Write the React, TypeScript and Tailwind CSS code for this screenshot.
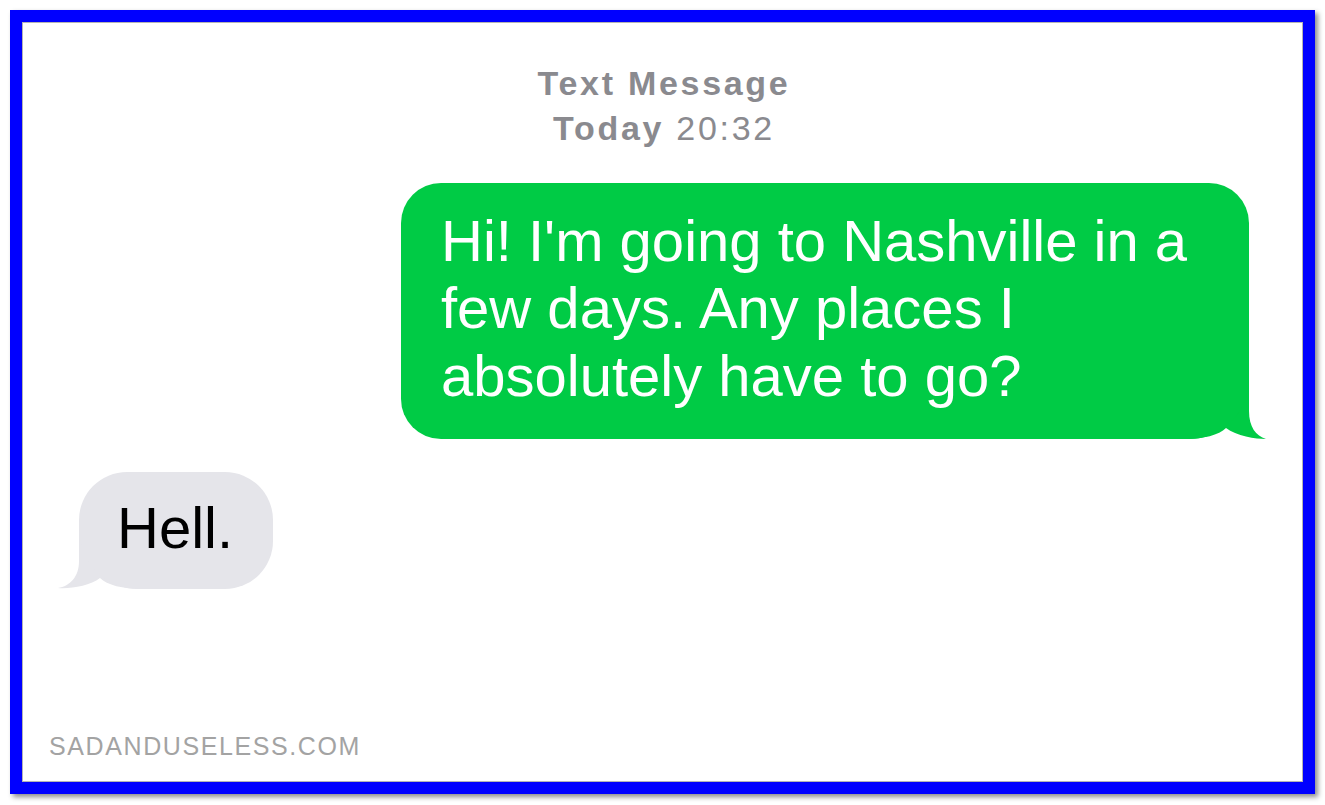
const GREEN = "#00cb45";
const GRAY = "#e5e5ea";

const SentBubble = ({ text }: { text: string }) => (
  <div className="relative mr-[53px] mt-[31.5px] self-end">
    <div className="relative z-10 w-[848px] rounded-[40px] rounded-br-[60px] bg-[#00cb45] pb-[29.5px] pl-[40px] pr-[40px] pt-[24px] text-[58px] leading-[67.5px] text-white">
      {text}
    </div>
    {/* tail, bottom right */}
    <svg className="absolute bottom-0 right-[-18px] z-0" width="86" height="60" viewBox="0 0 86 60">
      <path d="M0 0 H68 V32 C68 48 75 57 85 60 C75 60 55 57 45 49 C38 56 22 60 5 60 H0 Z" fill={GREEN} />
    </svg>
  </div>
);

const ReceivedBubble = ({ text }: { text: string }) => (
  <div className="relative ml-[56px] mt-[33px] self-start">
    <div className="relative z-10 rounded-[48px] rounded-bl-[60px] bg-[#e5e5ea] pb-[27.5px] pl-[38px] pr-[40px] pt-[22px] text-[58px] leading-[67.5px] text-black">
      {text}
    </div>
    {/* tail, bottom left */}
    <svg className="absolute bottom-0 left-[-21px] z-0" width="89" height="60" viewBox="0 0 89 60">
      <path d="M89 0 H21 V32 C21 48 12 57 0 59 C12 60 32 57 42 49 C49 56 65 60 84 60 H89 Z" fill={GRAY} />
    </svg>
  </div>
);

const App = () => {
  return (
    <div className="h-[805px] w-[1325px] bg-white p-[10px] font-['Liberation_Sans',Arial,sans-serif]">
      <div className="h-[784px] w-[1305px] border-[12px] border-[#0000ff] shadow-[3px_3px_5px_rgba(0,0,0,0.45)]">
        <div className="flex h-full flex-col border border-[#b4b4b4] bg-white">
          <div className="pl-[3px] pt-[38px] text-center text-[34px] leading-[45px] tracking-[2.7px] text-[#8a8a8f]">
            <div className="font-bold">Text Message</div>
            <div>
              <span className="font-bold">Today</span> 20:32
            </div>
          </div>

          <SentBubble text="Hi! I'm going to Nashville in a few days. Any places I absolutely have to go?" />
          <ReceivedBubble text="Hell." />

          <div className="mt-auto pb-[20px] pl-[26px] text-[25px] leading-[30px] tracking-[1.6px] text-[#a3a3a3]">
            SADANDUSELESS.COM
          </div>
        </div>
      </div>
    </div>
  );
};

export default App;
